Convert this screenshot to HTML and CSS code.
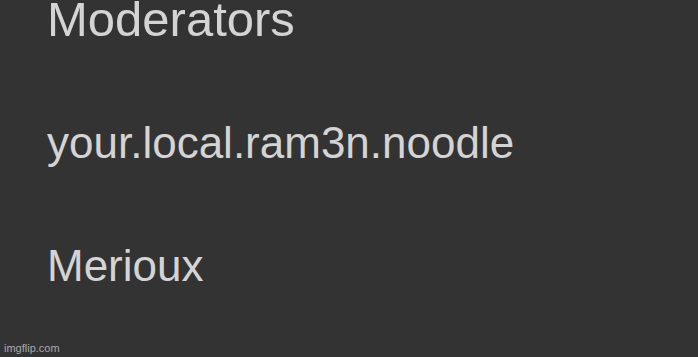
FILE: index.html
```html
<!DOCTYPE html>
<html>
<head>
<meta charset="utf-8">
<link rel="stylesheet" href="styles.css">
</head>
<body>
<div class="panel">
  <h2 class="title">Moderators</h2>
  <ul class="mods">
    <li class="mod">your.local.ram3n.noodle</li>
    <li class="mod">Merioux</li>
  </ul>
  <span class="watermark">imgflip.com</span>
</div>
</body>
</html>
```
FILE: styles.css
```css
html, body {
  margin: 0;
  padding: 0;
  background: #333333;
}
.panel {
  position: relative;
  width: 698px;
  height: 357px;
  overflow: hidden;
  padding-left: 47px;
  box-sizing: border-box;
  font-family: "Liberation Sans", Arial, sans-serif;
  color: #d4d4d4;
}
.title {
  margin: 0;
  font-size: 49px;
  font-weight: normal;
  line-height: 39px;
}
.mods {
  list-style: none;
  margin: 82px 0 0 0;
  padding: 0;
  display: flex;
  flex-direction: column;
  gap: 79px;
}
.mod {
  font-size: 44px;
  line-height: 44px;
}
.watermark {
  position: absolute;
  left: 4px;
  bottom: 3px;
  font-size: 11px;
  line-height: 11px;
  color: #a8a8a8;
}
```
